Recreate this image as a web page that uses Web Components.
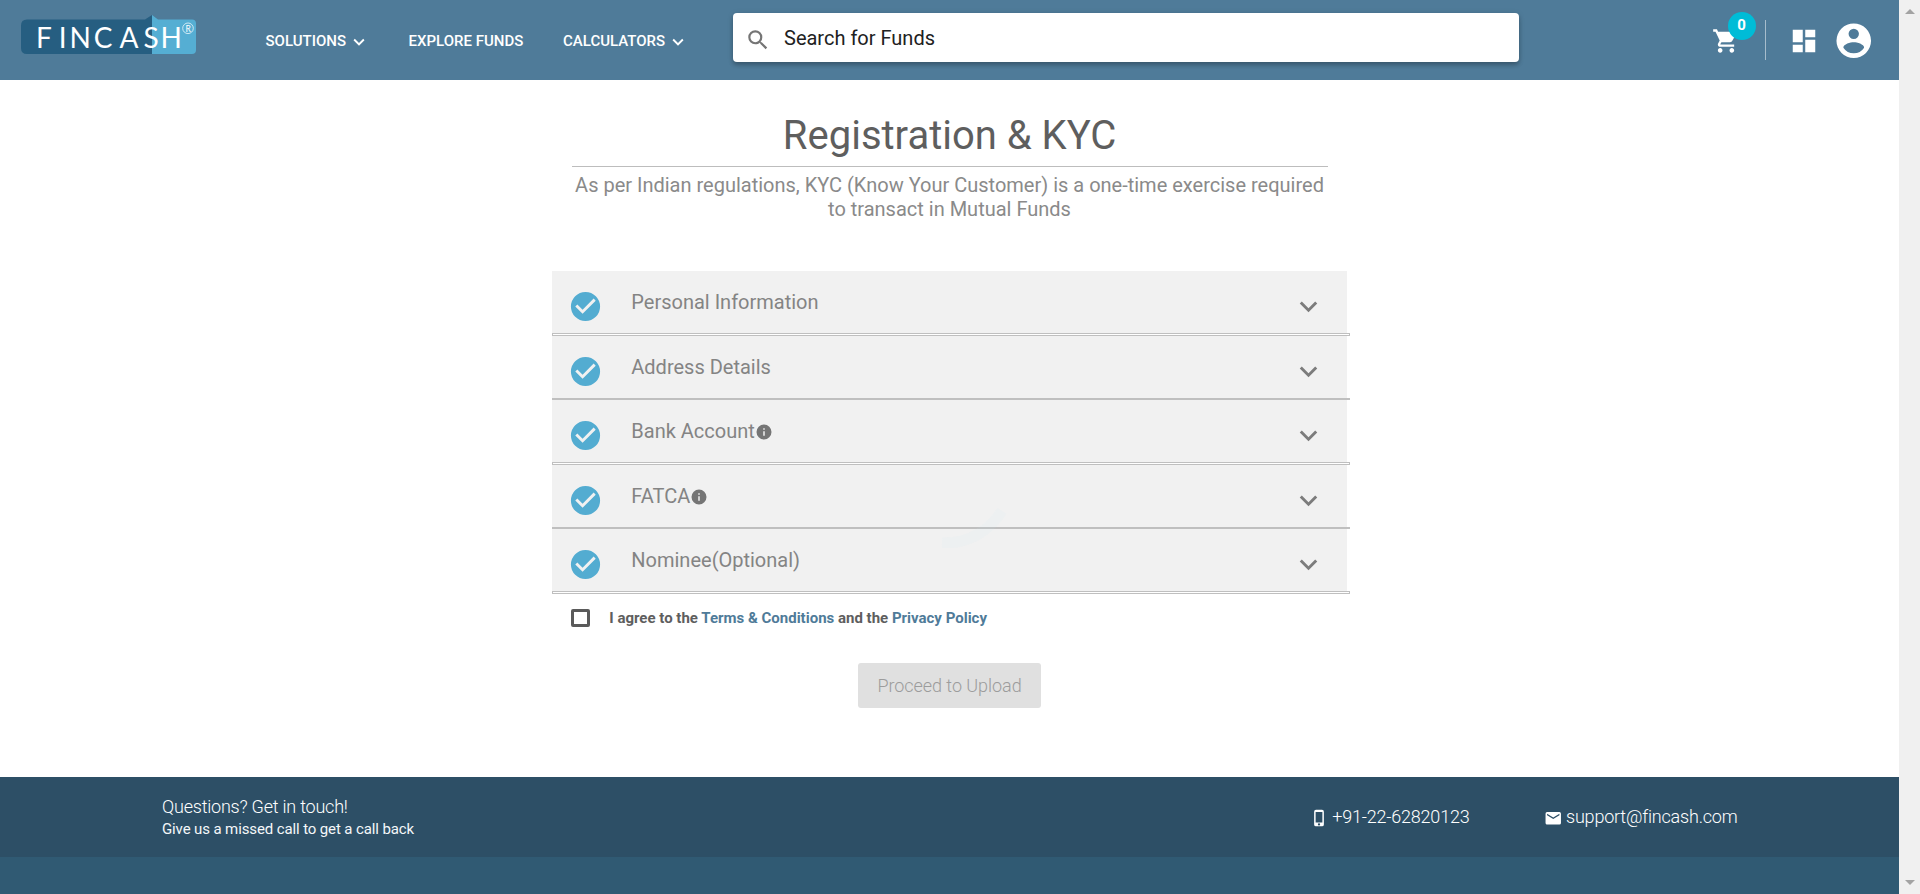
<!DOCTYPE html>
<html lang="en">
<head>
<meta charset="utf-8">
<title>Fincash - Registration &amp; KYC</title>
<style>
html,body{margin:0;height:100%;overflow:hidden;background:#fff}
body{font-family:Roboto,"Liberation Sans",sans-serif}
</style>
</head>
<body>
<fin-app></fin-app>
<script>
const define = (name, html, init) => customElements.define(name, class extends HTMLElement {
  constructor() {
    super();
    this.attachShadow({ mode: 'open' }).innerHTML = html;
  }
  connectedCallback() { if (init) init(this, this.shadowRoot); }
});

const ICONS = {
  chevron: '<path d="M7.41 8.59 12 13.17l4.59-4.58L18 10l-6 6-6-6z"/>',
  search: '<path d="M15.5 14h-.79l-.28-.27A6.47 6.47 0 0 0 16 9.5 6.5 6.5 0 1 0 9.5 16c1.61 0 3.09-.59 4.23-1.57l.27.28v.79l5 4.99L20.49 19l-4.99-5zm-6 0a4.5 4.5 0 1 1 0-9 4.5 4.5 0 0 1 0 9z"/>',
  cart: '<path d="M7 18c-1.1 0-1.99.9-1.99 2S5.900 22 7 22s2-.9 2-2-.9-2-2-2zM1 2v2h2l3.600 7.590-1.350 2.450c-.16.28-.25.61-.25.96 0 1.100.9 2 2 2h12v-2H7.420c-.14 0-.25-.11-.25-.25l.03-.12.9-1.630h7.450c.75 0 1.410-.41 1.750-1.030l3.580-6.490A1 1 0 0 0 20 4H5.210l-.94-2H1zm16 16c-1.100 0-1.990.9-1.990 2s.89 2 1.990 2 2-.9 2-2-.9-2-2-2z"/>',
  dashboard: '<path d="M3 13h8V3H3v10zm0 8h8v-6H3v6zm10 0h8V11h-8v10zm0-18v6h8V3h-8z"/>',
  account: '<path d="M12 2a10 10 0 1 0 0 20 10 10 0 0 0 0-20zm0 3a3 3 0 1 1 0 6 3 3 0 0 1 0-6zm0 14.200a7.200 7.200 0 0 1-6-3.220c.03-1.990 4-3.080 6-3.080 1.990 0 5.970 1.090 6 3.080a7.200 7.200 0 0 1-6 3.220z"/>',
  check: '<path d="M12 2a10 10 0 1 0 0 20 10 10 0 0 0 0-20zm-2 15-5-5 1.410-1.410L10 14.170l7.590-7.590L19 8l-9 9z"/>',
  info: '<path d="M12 2a10 10 0 1 0 0 20 10 10 0 0 0 0-20zm1 15h-2v-6h2v6zm0-8h-2V7h2v2z"/>',
  phone: '<path fill-rule="evenodd" d="M8 1h8a2.500 2.500 0 0 1 2.500 2.500v17A2.500 2.500 0 0 1 16 23H8a2.500 2.500 0 0 1-2.500-2.500v-17A2.500 2.500 0 0 1 8 1zm4 21a1.500 1.500 0 1 0 0-3 1.500 1.500 0 0 0 0 3zm4.500-4V4h-9v14z"/>',
  mail: '<path d="M20 4H4a2 2 0 0 0-2 2v12c0 1.100.9 2 2 2h16a2 2 0 0 0 2-2V6a2 2 0 0 0-2-2zm0 4-8 5-8-5V6l8 5 8-5v2z"/>'
};

define('fin-icon', `<style>
:host{display:block;flex:none;width:var(--s,24px);height:var(--s,24px)}
svg{display:block;width:100%;height:100%;fill:currentColor}
</style><svg viewBox="0 0 24 24"></svg>`, (el, r) => {
  el.style.setProperty('--s', el.getAttribute('size') + 'px');
  r.querySelector('svg').innerHTML = ICONS[el.getAttribute('name')];
});

define('fin-logo', `<style>
:host{display:block;width:176px;height:40px}
svg{display:block}
text{font-family:Lato,sans-serif;fill:#fff}
</style>
<svg width="176" height="40" viewBox="0 0 176 40">
<path d="M6 4.500H124L131 0V39H6Q0 39 0 33V10.500Q0 4.500 6 4.500Z" fill="#265e81"/>
<path d="M131 0L137 4.500H171Q175 4.500 175 8.500V35Q175 39 171 39H131Z" fill="#55aed3"/>
<text font-size="28" y="32.500" x="15 37.700 48.400 72.700 98.600 122.600 139.400">FINCASH</text>
<circle cx="167" cy="13.300" r="5.300" fill="none" stroke="#d9eef6" stroke-width=".9"/>
<text x="164.500" y="16.500" font-size="8.500">R</text>
</svg>`);

define('fin-nav-item', `<style>
:host{display:flex;align-items:center;height:22px;font-weight:500;font-size:15px;color:#fff;white-space:nowrap}
fin-icon{margin:2px 0 0 2px}
</style><span><slot></slot></span>`, (el, r) => {
  if (el.hasAttribute('menu')) r.querySelector('span').insertAdjacentHTML('afterend', '<fin-icon name="chevron" size="22"></fin-icon>');
});

define('fin-search', `<style>
:host{display:flex;align-items:center;box-sizing:border-box;width:786px;height:49px;padding-left:12px;background:#fff;border-radius:4px;box-shadow:0 3px 4px rgba(0,0,0,.22),0 1px 6px rgba(0,0,0,.12);font-size:20px;color:#212121}
fin-icon{color:#757575;margin:4px 13px 0 0}
span{padding-top:1px}
</style><fin-icon name="search" size="26"></fin-icon><span><slot></slot></span>`);

define('fin-header', `<style>
:host{display:flex;align-items:flex-start;height:80px;background:#4f7b99;color:#fff}
fin-logo{margin:15px 0 0 21px}
nav{display:flex;width:420px;margin:30px 0 0 68.500px}
nav fin-nav-item:nth-child(2){margin-left:38.600px}
nav fin-nav-item:nth-child(3){margin-left:39.800px}
fin-search{margin:13px 0 0 47.500px}
.tools{display:flex;align-items:center;height:82px;margin:0 25px 0 auto}
.cart{position:relative;margin-right:25px}
.badge{position:absolute;left:16px;top:-15px;width:28px;height:28px;border-radius:50%;background:#00bcd7;font:700 15px/26px Roboto,sans-serif;text-align:center}
.line{width:1px;height:40px;margin-bottom:2px;background:#a7bdcc}
.dash{margin-left:23px}
.acc{margin:0 0 0 14px}
</style>
<fin-logo></fin-logo>
<nav><fin-nav-item menu>SOLUTIONS</fin-nav-item><fin-nav-item>EXPLORE FUNDS</fin-nav-item><fin-nav-item menu>CALCULATORS</fin-nav-item></nav>
<fin-search>Search for Funds</fin-search>
<div class="tools">
<div class="cart"><fin-icon name="cart" size="28"></fin-icon><span class="badge">0</span></div>
<div class="line"></div>
<fin-icon class="dash" name="dashboard" size="30"></fin-icon>
<fin-icon class="acc" name="account" size="41.500"></fin-icon>
</div>`);

define('fin-step', `<style>
:host{display:block;width:798px}
.row{display:flex;box-sizing:border-box;width:795px;height:62px;padding-left:16px;background:#f1f1f1;font-size:20px;line-height:62px;color:#848484}
.check{margin-top:18px;color:#53acd1}
.label{display:flex;margin-left:28.300px;flex:1}
.label fin-icon{margin:23px 0 0 0;color:#757575}
.open{margin:18px 21px 0 0;color:#7c7c7c}
.rule{box-sizing:border-box;height:3px;border:1px solid #bfbfbf;background:#fff}
:host([thin]) .rule{height:2px}
</style>
<div class="row"><fin-icon class="check" name="check" size="35"></fin-icon><div class="label"><slot></slot></div><fin-icon class="open" name="chevron" size="35"></fin-icon></div>
<div class="rule"></div>`, (el, r) => {
  if (el.hasAttribute('info')) r.querySelector('.label').insertAdjacentHTML('beforeend', '<fin-icon name="info" size="18"></fin-icon>');
});

define('fin-agree', `<style>
:host{display:flex;align-items:center;height:26px;font-weight:700;font-size:15px;color:#5e5e5e}
i{box-sizing:border-box;width:19px;height:18px;margin:0 19.300px 0 19px;border:3px solid #5a5a5a;border-radius:2px}
a{color:#4f7b99}
</style><i></i><span>I agree to the <a>Terms &amp; Conditions</a> and the <a>Privacy Policy</a></span>`);

define('fin-loading', `<style>
:host{position:absolute;left:908px;top:500px;width:110px;height:80px;pointer-events:none;color:rgba(0,0,0,.008);font-size:22px}
svg{display:block;height:48px}
span{display:block;line-height:30px;margin-left:4px}
</style><svg width="110" height="48"><path d="M34 43Q72 44 94 11" fill="none" stroke="rgba(205,228,246,.09)" stroke-width="11"/></svg><span>Loading...</span>`);

define('fin-kyc', `<style>
:host{display:flex;flex-direction:column;align-items:center;height:697px;box-sizing:border-box;padding-top:32px;background:#fff}
h1{margin:0;width:756px;height:54px;border-bottom:1px solid #bdbdbd;font-size:40px;line-height:48px;font-weight:400;text-align:center;color:#5e5e5e}
p{margin:6px 0 50px;width:756px;font-size:20px;line-height:24px;text-align:center;color:#8a8a8a}
.steps{width:798px;margin-left:3px}
fin-agree{margin-top:11px}
button{margin-top:32px;width:183px;height:45px;padding:0;border:0;border-radius:3px;background:#e0e0e0;font:300 18px/45px Roboto,sans-serif;letter-spacing:-.05px;color:#9c9c9c}
</style>
<h1>Registration &amp; KYC</h1>
<p>As per Indian regulations, KYC (Know Your Customer) is a one-time exercise required to transact in Mutual Funds</p>
<div class="steps">
<fin-step>Personal Information</fin-step>
<fin-step thin>Address Details</fin-step>
<fin-step info>Bank Account</fin-step>
<fin-step info thin>FATCA</fin-step>
<fin-step>Nominee(Optional)</fin-step>
<fin-agree></fin-agree>
</div>
<button disabled>Proceed to Upload</button>
<fin-loading></fin-loading>`);

define('fin-footer', `<style>
:host{display:block;height:117px;background:#305a73;color:#fff}
.bar{display:flex;align-items:center;box-sizing:border-box;height:80px;padding:0 161.500px 0 162px;background:#2d4f66}
.ask{margin-right:auto;padding-top:2px;font:300 18px/22px Roboto,sans-serif;letter-spacing:-.22px}
.ask small{display:block;font-size:15px;font-weight:400;letter-spacing:-.12px;color:#f4f7f9}
.c{display:flex;align-items:center;font-weight:300;font-size:18px;line-height:22px;letter-spacing:-.2px}
.c fin-icon{margin-top:2px}
.tel fin-icon{margin:2px 4px 0 0}
.mail fin-icon{margin-right:3.500px}
.mail{margin-left:74.500px}
</style>
<div class="bar">
<div class="ask">Questions? Get in touch!<small>Give us a missed call to get a call back</small></div>
<div class="c tel"><fin-icon name="phone" size="18"></fin-icon><span>+91-22-62820123</span></div>
<div class="c mail"><fin-icon name="mail" size="18.500"></fin-icon><span>support@fincash.com</span></div>
</div>`);

define('fin-scrollbar', `<style>
:host{display:flex;flex-direction:column;justify-content:space-between;align-items:center;box-sizing:border-box;width:21px;height:894px;padding:9px 0;background:#f0f0f0}
svg{display:block;fill:#a3a3a3}
</style><svg width="10" height="5"><path d="M5 0L10 5H0Z"/></svg><svg width="10" height="5"><path d="M0 0H10L5 5Z"/></svg>`);

define('fin-app', `<style>
:host{display:grid;grid-template-columns:1899px 21px;width:1920px;height:894px;overflow:hidden}
</style>
<main><fin-header></fin-header><fin-kyc></fin-kyc><fin-footer></fin-footer></main>
<fin-scrollbar></fin-scrollbar>`);
</script>
</body>
</html>
